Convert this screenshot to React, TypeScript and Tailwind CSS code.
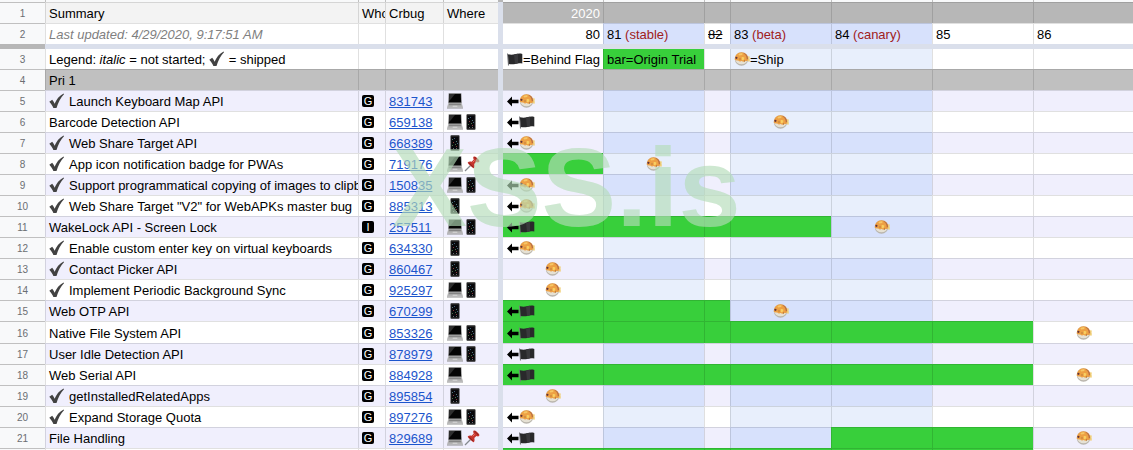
import type { ReactNode } from "react";
import clsx from "clsx";

type Place = "desktop" | "mobile" | "pinned";
type Mark = "ship" | "earlierShip" | "earlierFlag";

interface Feature {
  name: string;
  shipped?: boolean;
  who: "G" | "I";
  bug: string;
  where: Place[];
  // milestone -> marker drawn in that cell
  marks: Record<number, Mark>;
  // milestones covered by the origin trial bar
  trial?: number[];
}

const MILESTONES = [80, 81, 82, 83, 84, 85, 86];
const ACTIVE = [81, 83, 84];

const FEATURES: Feature[] = [
  { name: "Launch Keyboard Map API", shipped: true, who: "G", bug: "831743", where: ["desktop"], marks: { 80: "earlierShip" } },
  { name: "Barcode Detection API", who: "G", bug: "659138", where: ["desktop", "mobile"], marks: { 80: "earlierFlag", 83: "ship" } },
  { name: "Web Share Target API", shipped: true, who: "G", bug: "668389", where: ["mobile"], marks: { 80: "earlierShip" } },
  { name: "App icon notification badge for PWAs", shipped: true, who: "G", bug: "719176", where: ["desktop", "pinned"], marks: { 81: "ship" }, trial: [80] },
  { name: "Support programmatical copying of images to clipboard", shipped: true, who: "G", bug: "150835", where: ["desktop", "mobile"], marks: { 80: "earlierShip" } },
  { name: 'Web Share Target "V2" for WebAPKs master bug', shipped: true, who: "G", bug: "885313", where: ["mobile"], marks: { 80: "earlierShip" } },
  { name: "WakeLock API - Screen Lock", who: "I", bug: "257511", where: ["desktop", "mobile"], marks: { 80: "earlierFlag", 84: "ship" }, trial: [80, 81, 82, 83] },
  { name: "Enable custom enter key on virtual keyboards", shipped: true, who: "G", bug: "634330", where: ["mobile"], marks: { 80: "earlierShip" } },
  { name: "Contact Picker API", shipped: true, who: "G", bug: "860467", where: ["mobile"], marks: { 80: "ship" } },
  { name: "Implement Periodic Background Sync", shipped: true, who: "G", bug: "925297", where: ["desktop", "mobile"], marks: { 80: "ship" } },
  { name: "Web OTP API", who: "G", bug: "670299", where: ["mobile"], marks: { 80: "earlierFlag", 83: "ship" }, trial: [80, 81, 82] },
  { name: "Native File System API", who: "G", bug: "853326", where: ["desktop", "mobile"], marks: { 80: "earlierFlag", 86: "ship" }, trial: [80, 81, 82, 83, 84, 85] },
  { name: "User Idle Detection API", who: "G", bug: "878979", where: ["desktop", "mobile"], marks: { 80: "earlierFlag" } },
  { name: "Web Serial API", who: "G", bug: "884928", where: ["desktop"], marks: { 80: "earlierFlag", 86: "ship" }, trial: [80, 81, 82, 83, 84, 85] },
  { name: "getInstalledRelatedApps", shipped: true, who: "G", bug: "895854", where: ["mobile"], marks: { 80: "ship" } },
  { name: "Expand Storage Quota", shipped: true, who: "G", bug: "897276", where: ["desktop", "mobile"], marks: { 80: "earlierShip" } },
  { name: "File Handling", who: "G", bug: "829689", where: ["desktop", "pinned"], marks: { 80: "earlierFlag", 86: "ship" }, trial: [84, 85] },
];

/* Icons */

const ICON = "mb-0.5 size-4 shrink-0";

function Check() {
  return (
    <svg viewBox="0 0 16 16" className={ICON} role="img" aria-label="shipped">
      <path d="M.3 8.800 3.200 6.800c1.200 1.300 1.900 2.500 2.400 3.900C7.400 6.300 10.200 2.700 14.600.4L15 1.300C11.700 4.800 9.200 9.300 7.500 15H4.400C3.400 12.600 2.100 10.700.3 8.800Z" fill="#424242" />
    </svg>
  );
}

function Laptop() {
  return (
    <svg viewBox="0 0 16 16" className={ICON} role="img" aria-label="desktop">
      <path d="M1.700.3h12.600l.4 9.700H1.300Z" fill="#6f6f6f" />
      <path d="M2.200.9h11.600l.3 8.400H1.900Z" fill="#050505" />
      <path d="M2.200.9H8L3.500 6.500 2 8Z" fill="#2f2f2f" />
      <path d="M1.300 10h13.400l1.300 4.600H0Z" fill="#b4b4b4" />
      <path d="M2.300 10.500h11.400l.5 1.700H1.800Z" fill="#858585" />
      <path d="M5.800 12.700h4.400l.3 1.500h-5Z" fill="#cfcfcf" />
      <path d="M0 14.600h16v.9H0Z" fill="#8f8f8f" />
    </svg>
  );
}

function Phone() {
  return (
    <svg viewBox="0 0 16 16" className={ICON} role="img" aria-label="mobile">
      <rect x="3.500" y=".2" width="9" height="15.600" rx=".8" fill="#222" />
      <rect x="4.500" y="2" width="7" height="12" fill="#08080b" />
      <path d="M5 4h1v1H5Zm4 2h1v1H9Z" fill="#55787d" />
      <path d="M7 3h1v1H7Zm3 5h1v1h-1Z" fill="#3f6079" />
      <path d="M6 7h1v1H6Zm3 4h1v1H9Z" fill="#84393a" />
      <path d="M5 10h1v1H5Zm3-1h1v1H8Z" fill="#4c7048" />
      <path d="M6 13h1v1H6Zm3 0h1v1H9Z" fill="#6d6d74" />
    </svg>
  );
}

function Pin() {
  return (
    <svg viewBox="0 0 16 16" className={clsx(ICON, "ml-px")} role="img" aria-label="pinned">
      <path d="m6.500 9.500-5.500 5.500" stroke="#85898e" strokeWidth="1.200" />
      <path d="M9.500.8c.8-.7 1.800-.4 3 .6l1.800 1.800c1.100 1.200 1.400 2.100.7 2.900-.8.700-1.800.3-2.600-.1L10.300 8c.5 1.900.3 3.300-.5 4.200C8 11.800 4 8 3.700 6.500c.9-.9 2.300-1.100 4-.7L9.800 3.500C9.300 2.600 8.800 1.600 9.500.8Z" fill="#c5332c" />
      <path d="M10.500 1.500c1 .2 3.200 2.400 3.600 3.500M5 6.800l4.200 4.300" stroke="#83211f" fill="none" />
      <path d="m8.800 6.300 2-2" stroke="#ee7a6d" />
    </svg>
  );
}

function Fish({ label = "ship" }: { label?: string }) {
  return (
    <svg viewBox="0 0 16 16" className={ICON} role="img" aria-label={label}>
      <path d="m13 7 2-2.200c.8.8.8 1.800.5 3 .5 1.200.4 2.200-.3 3.200L13 9.500Z" fill="#f0cf78" />
      <circle cx="7.500" cy="8" r="6.700" fill="#b9b5ad" />
      <path d="M1.200 8.500h12.500c-.6 3-3 4.700-6.200 4.700s-5.600-1.700-6.300-4.700Z" fill="#e6e1d4" />
      <path d="M.8 8.800C.6 4.500 3.500 1.300 7.500 1.300s6.900 3 6.700 7.200c-.4 1.300-1.500 2-2.700 1.500-1.300 1-2.700.9-3.800 0-1.400.7-2.600.4-3.500-.6-1.200.4-2.400.2-3.400-.6Z" fill="#eda044" />
      <path d="M10 1.900c2.200.9 4 3 4.100 5.800l-1.300.8C12.700 5.700 11.700 3.500 9.500 2.500Z" fill="#b76d45" />
      <path d="M4.500 3.200c1.200-.9 2.800-1.100 4-.7L8.300 4 5 4.600Z" fill="#f6c766" />
      <path d="M7.600 6.200c1.200-.6 2.300-.3 2.900.6L9.600 9l-1.700.3Z" fill="#f8cf62" />
      <circle cx="2.400" cy="6.800" r="1.100" fill="#61303a" />
      <path d="M5.500 7.500h1v1h-1Zm4.500 2h1v1h-1Z" fill="#94603a" />
    </svg>
  );
}

function Flag() {
  return (
    <svg viewBox="0 0 16 16" className={ICON} role="img" aria-label="behind flag">
      <path d="M0 2.500h1L2.100 14.500H1Z" fill="#77777c" />
      <path d="M.9 3.300c2.500.5 4.500.6 6.900 0s4.700-1 7.500-.4v9.700c-2.700-.5-4.700-.2-7 .3s-4.200.5-6.600 0Z" fill="#29292b" />
      <path d="M7 3.600c1.500-.2 2.500-.7 4-.9v9.600l-3 .6Z" fill="#39393c" />
    </svg>
  );
}

function Arrow() {
  return (
    <svg viewBox="0 0 12 16" className="mb-0.5 ml-px h-4 w-3 shrink-0" role="img" aria-label="earlier">
      <path d="M0 8.500 5 3.500v3.300h6.500v3.400H5v3.300Z" fill="#000" />
    </svg>
  );
}

/* Cells */

const LINE = "border-l border-t border-black/12 p-0";

interface CellProps {
  children?: ReactNode;
  className?: string;
  align?: string;
}

function Cell({ children, className, align }: CellProps) {
  return (
    <td className={clsx(LINE, className)}>
      <div className={clsx("flex h-5 items-center overflow-hidden whitespace-pre px-[3px] pt-0.5", align)}>
        {children}
      </div>
    </td>
  );
}

function RowNumber({ children, className = "border-t" }: { children?: ReactNode; className?: string }) {
  return (
    <th
      scope="row"
      className={clsx("border-[#c0c0c0] bg-[#f8f9fa] p-0 text-center text-[10px] leading-4 font-normal text-[#6b6e72]", className)}
    >
      {children && <div className="pt-0.5">{children}</div>}
    </th>
  );
}

function Divider() {
  return <td className="bg-[#dadfeb] p-0" />;
}

function milestoneFill(milestone: number, odd: boolean, trial?: number[]) {
  if (trial?.includes(milestone)) return "bg-[#38cf3b]";
  if (ACTIVE.includes(milestone)) return odd ? "bg-[#d7e1fc]" : "bg-[#e8effc]";
  return odd ? "bg-[#f0effd]" : "bg-white";
}

function MarkIcon({ mark }: { mark: Mark }) {
  if (mark === "ship") return <Fish />;
  return (
    <>
      <Arrow />
      {mark === "earlierShip" ? <Fish label="shipped earlier" /> : <Flag />}
    </>
  );
}

function FeatureRow({ feature, row }: { feature: Feature; row: number }) {
  const odd = row % 2 === 1;
  const fill = odd ? "bg-[#f0effd]" : "bg-white";
  return (
    <tr className={row === 16 ? "h-[22px]" : "h-[21px]"}>
      <RowNumber>{row}</RowNumber>
      <Cell className={fill}>
        {feature.shipped && <Check />}
        <span className={feature.shipped ? "ml-1" : ""}>{feature.name}</span>
      </Cell>
      <Cell className={fill}>
        <span className="mb-0.5 flex size-3 items-center justify-center rounded-xs bg-black text-[11px] text-white">
          {feature.who}
        </span>
      </Cell>
      <Cell className={fill}>
        <a href={`https://crbug.com/${feature.bug}`} className="text-[#1c55cc] underline">
          {feature.bug}
        </a>
      </Cell>
      <Cell className={fill}>
        {feature.where.map((place) =>
          place === "desktop" ? <Laptop key={place} /> : place === "mobile" ? <Phone key={place} /> : <Pin key={place} />,
        )}
      </Cell>
      <Divider />
      {MILESTONES.map((m) => {
        const mark = feature.marks[m];
        return (
          <Cell
            key={m}
            className={clsx(milestoneFill(m, odd, feature.trial), m === 80 && "border-l-0")}
            align={mark === "ship" ? "justify-center" : ""}
          >
            {mark && <MarkIcon mark={mark} />}
          </Cell>
        );
      })}
    </tr>
  );
}

export default function App() {
  return (
    <main className="relative overflow-hidden bg-white font-['Liberation_Sans',Arial,sans-serif] text-[13px] leading-4 text-black">
      <table className="w-full table-fixed border-separate border-spacing-0">
        <colgroup>
          <col className="w-[45px]" />
          <col className="w-[313px]" />
          <col className="w-[27px]" />
          <col className="w-[58px]" />
          <col className="w-[55px]" />
          <col className="w-[5px]" />
          <col className="w-[100px]" />
          <col className="w-[101px]" />
          <col className="w-[26px]" />
          <col className="w-[101px]" />
          <col className="w-[101px]" />
          <col className="w-[101px]" />
          <col />
        </colgroup>
        <thead>
          {/* bottom edge of the column letters */}
          <tr className="h-[2px]">
            <td className="bg-[#f8f9fa] p-0" />
            {[1, 2, 3, 4].map((n) => (
              <td key={n} className="border-l border-[#c0c0c0] bg-[#f8f9fa] p-0" />
            ))}
            <td className="bg-[#b7b7b7] p-0" />
            {MILESTONES.map((m) => (
              <td key={m} className={clsx("border-l border-[#c0c0c0] bg-[#f8f9fa] p-0", m === 80 && "border-l-0")} />
            ))}
          </tr>
        </thead>
        <tbody>
          <tr className="h-[21px]">
            <RowNumber>1</RowNumber>
            <Cell className="bg-[#f3f3f3]">Summary</Cell>
            <Cell className="bg-[#f3f3f3]">Who</Cell>
            <Cell className="bg-[#f3f3f3]">Crbug</Cell>
            <Cell className="bg-[#f3f3f3]">Where</Cell>
            <Divider />
            {MILESTONES.map((m) => (
              <Cell key={m} className={clsx("bg-[#b7b7b7] text-white", m === 80 && "border-l-0")} align={m === 80 ? "justify-end" : ""}>
                {m === 80 && "2020"}
              </Cell>
            ))}
          </tr>
          <tr className="h-[21px]">
            <RowNumber>2</RowNumber>
            <Cell className="text-[#808080] italic">Last updated: 4/29/2020, 9:17:51 AM</Cell>
            <Cell />
            <Cell />
            <Cell />
            <Divider />
            <Cell className="border-l-0" align="justify-end">80</Cell>
            <Cell className="bg-[#d7e1fc]">81 <span className="text-[#a02020]">(stable)</span></Cell>
            <Cell><s>82</s></Cell>
            <Cell className="bg-[#d7e1fc]">83 <span className="text-[#a02020]">(beta)</span></Cell>
            <Cell className="bg-[#d7e1fc]">84 <span className="text-[#a02020]">(canary)</span></Cell>
            <Cell>85</Cell>
            <Cell>86</Cell>
          </tr>
          {/* frozen rows edge */}
          <tr className="h-[5px]">
            <td className="bg-[#b7b7b7] p-0" />
            <td colSpan={12} className="bg-[#dadfeb] p-0" />
          </tr>
          <tr className="h-5">
            <RowNumber className="border-t-0">3</RowNumber>
            <Cell className="border-t-0">
              Legend: <i>italic</i> = not started; <Check /> = shipped
            </Cell>
            <Cell className="border-t-0" />
            <Cell className="border-t-0" />
            <Cell className="border-t-0" />
            <Divider />
            <Cell className="border-t-0 border-l-0" align="justify-end"><Flag />=Behind Flag</Cell>
            <Cell className="border-t-0 bg-[#38cf3b]">bar=Origin Trial</Cell>
            <Cell className="border-t-0" />
            <Cell className="border-t-0 bg-[#e8effc]"><Fish />=Ship</Cell>
            <Cell className="border-t-0 bg-[#e8effc]" />
            <Cell className="border-t-0" />
            <Cell className="border-t-0" />
          </tr>
          <tr className="h-[21px]">
            <RowNumber>4</RowNumber>
            <Cell className="bg-[#c0c0c0]">Pri 1</Cell>
            <Cell className="bg-[#c0c0c0]" />
            <Cell className="bg-[#c0c0c0]" />
            <Cell className="bg-[#c0c0c0]" />
            <Divider />
            {MILESTONES.map((m) => (
              <Cell key={m} className={clsx("bg-[#c0c0c0]", m === 80 && "border-l-0")} />
            ))}
          </tr>
          {FEATURES.map((feature, i) => (
            <FeatureRow key={feature.bug} feature={feature} row={i + 5} />
          ))}
          {/* top edge of the next row */}
          <tr className="h-[2px]">
            <RowNumber />
            {[1, 2, 3, 4].map((n) => (
              <td key={n} className={LINE} />
            ))}
            <Divider />
            {MILESTONES.map((m) => (
              <td key={m} className={clsx(LINE, m !== 86 && "bg-[#38cf3b]", m === 80 && "border-l-0")} />
            ))}
          </tr>
        </tbody>
      </table>

      {/* watermark */}
      <div className="pointer-events-none absolute inset-x-0 top-[132px] text-center text-[112px] leading-[112px] font-bold text-[#b4dcb9]/65">
        XSS.is
      </div>
    </main>
  );
}
